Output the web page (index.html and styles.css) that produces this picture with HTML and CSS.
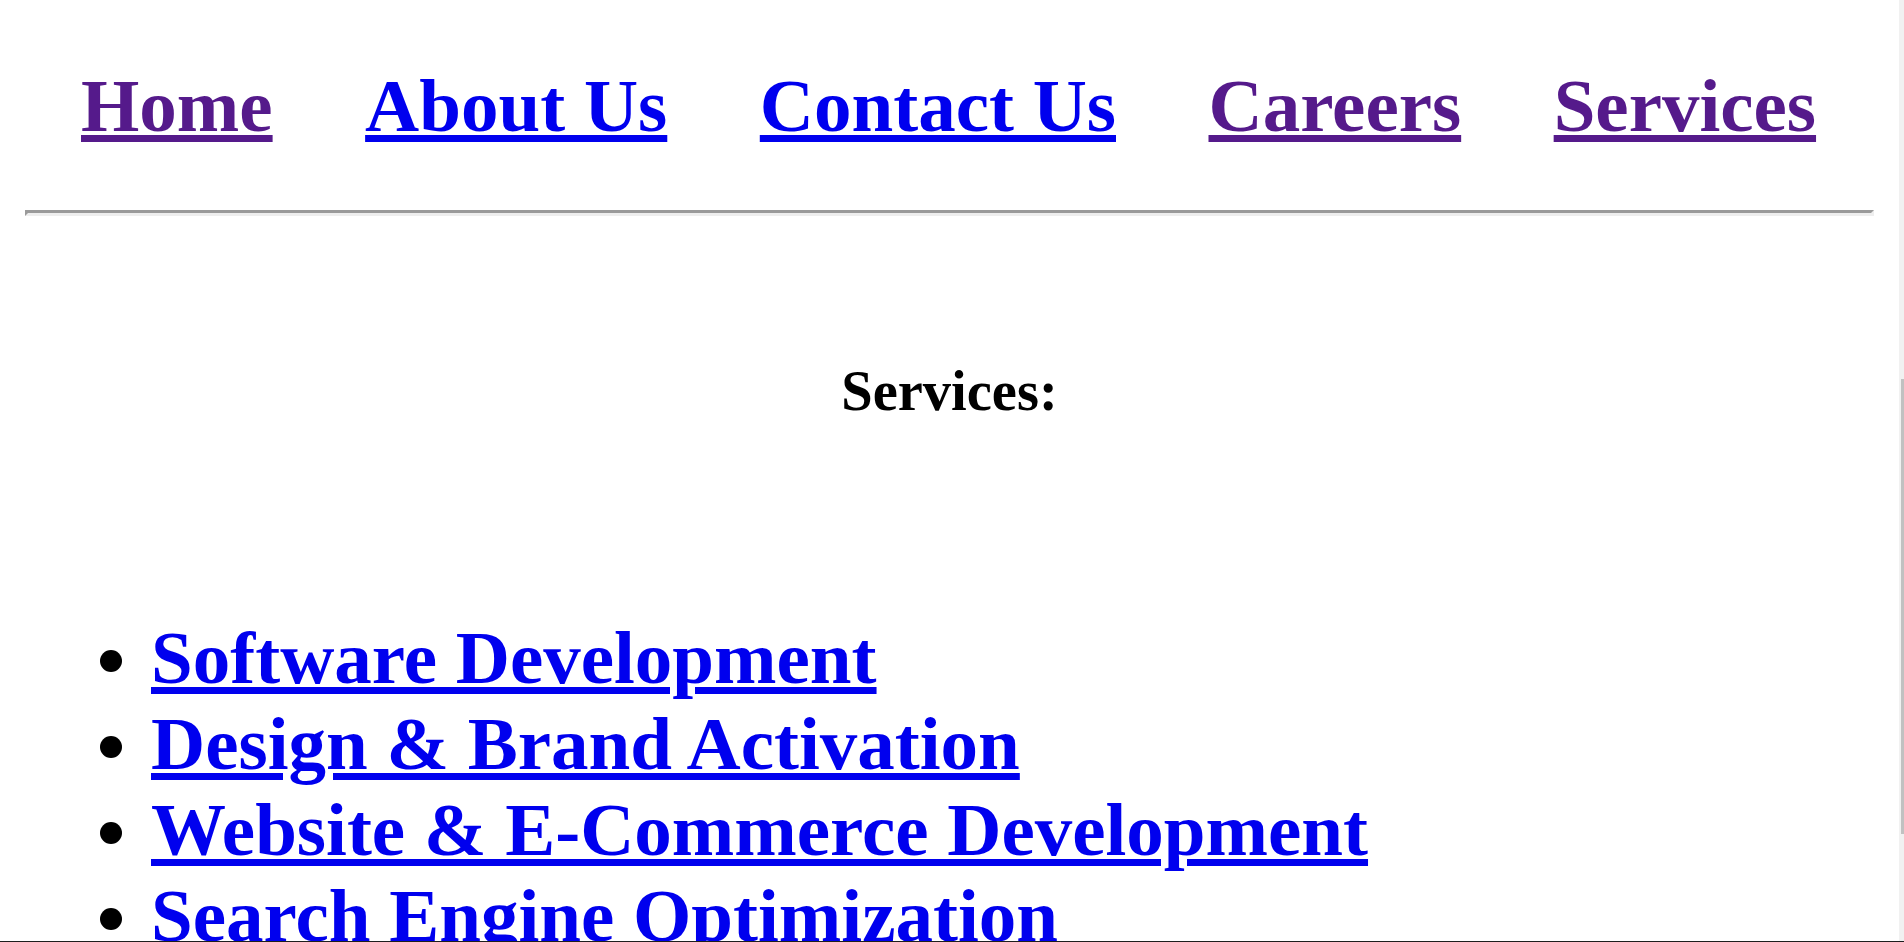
FILE: index.html
```html
<!DOCTYPE html>
<html lang="en">
<head>
<meta charset="utf-8">
<title>Services</title>
<link rel="stylesheet" href="styles.css">
</head>
<body>
<div class="page">
  <nav class="nav">
    <a class="nav-link visited" href="#home">Home</a>
    <a class="nav-link" href="#about">About Us</a>
    <a class="nav-link" href="#contact">Contact Us</a>
    <a class="nav-link visited" href="#careers">Careers</a>
    <a class="nav-link visited" href="#services">Services</a>
  </nav>
  <hr class="divider">
  <h2 class="heading">Services:</h2>
  <ul class="services">
    <li><a class="service-link" href="#software">Software Development</a></li>
    <li><a class="service-link" href="#design">Design &amp; Brand Activation</a></li>
    <li><a class="service-link" href="#web">Website &amp; E-Commerce Development</a></li>
    <li><a class="service-link" href="#seo">Search Engine Optimization</a></li>
  </ul>
</div>
<div class="scrollbar" aria-hidden="true"><div class="scrollbar-thumb"></div></div>
<div class="frame-edge" aria-hidden="true"></div>
</body>
</html>
```

FILE: styles.css
```css
html, body {
  margin: 0;
  padding: 0;
  background: #ffffff;
}

html {
  overflow: hidden;
}

body {
  font-family: "Liberation Serif", "Times New Roman", serif;
  color: #000000;
}

.page {
  width: 1849px;
  margin-left: 25px;
  padding-bottom: 200px;
}

.nav {
  display: flex;
  align-items: baseline;
  gap: 92.5px;
  padding: 63px 0 0 56px;
  font-size: 75px;
  font-weight: bold;
  line-height: normal;
}

.nav-link {
  color: #0000ee;
  text-decoration: underline;
  white-space: nowrap;
}

.nav-link.visited {
  color: #551a8b;
}

.divider {
  margin: 61px 0 0 0;
  height: 0;
  border-style: solid;
  border-width: 3px;
  border-top-color: #9a9a9a;
  border-left-color: #9a9a9a;
  border-bottom-color: #eeeeee;
  border-right-color: #eeeeee;
}

.heading {
  margin: 143px 0 0 0;
  text-align: center;
  font-size: 56.5px;
  font-weight: bold;
  line-height: normal;
}

.services {
  margin: 192px 0 0 0;
  padding-left: 126px;
  font-size: 75px;
  font-weight: bold;
  line-height: normal;
  list-style: disc outside;
}

.service-link {
  color: #0000ee;
  text-decoration: underline;
}

.scrollbar {
  position: fixed;
  top: 0;
  right: 0;
  width: 5px;
  height: 100vh;
  background: #f1f1f1;
}

.scrollbar-thumb {
  margin: 379px 0 0 2px;
  width: 3px;
  height: 455px;
  background: #c1c1c1;
}

.frame-edge {
  position: fixed;
  left: 0;
  right: 0;
  bottom: 0;
  height: 1px;
  background: #1e1e1e;
}
```
